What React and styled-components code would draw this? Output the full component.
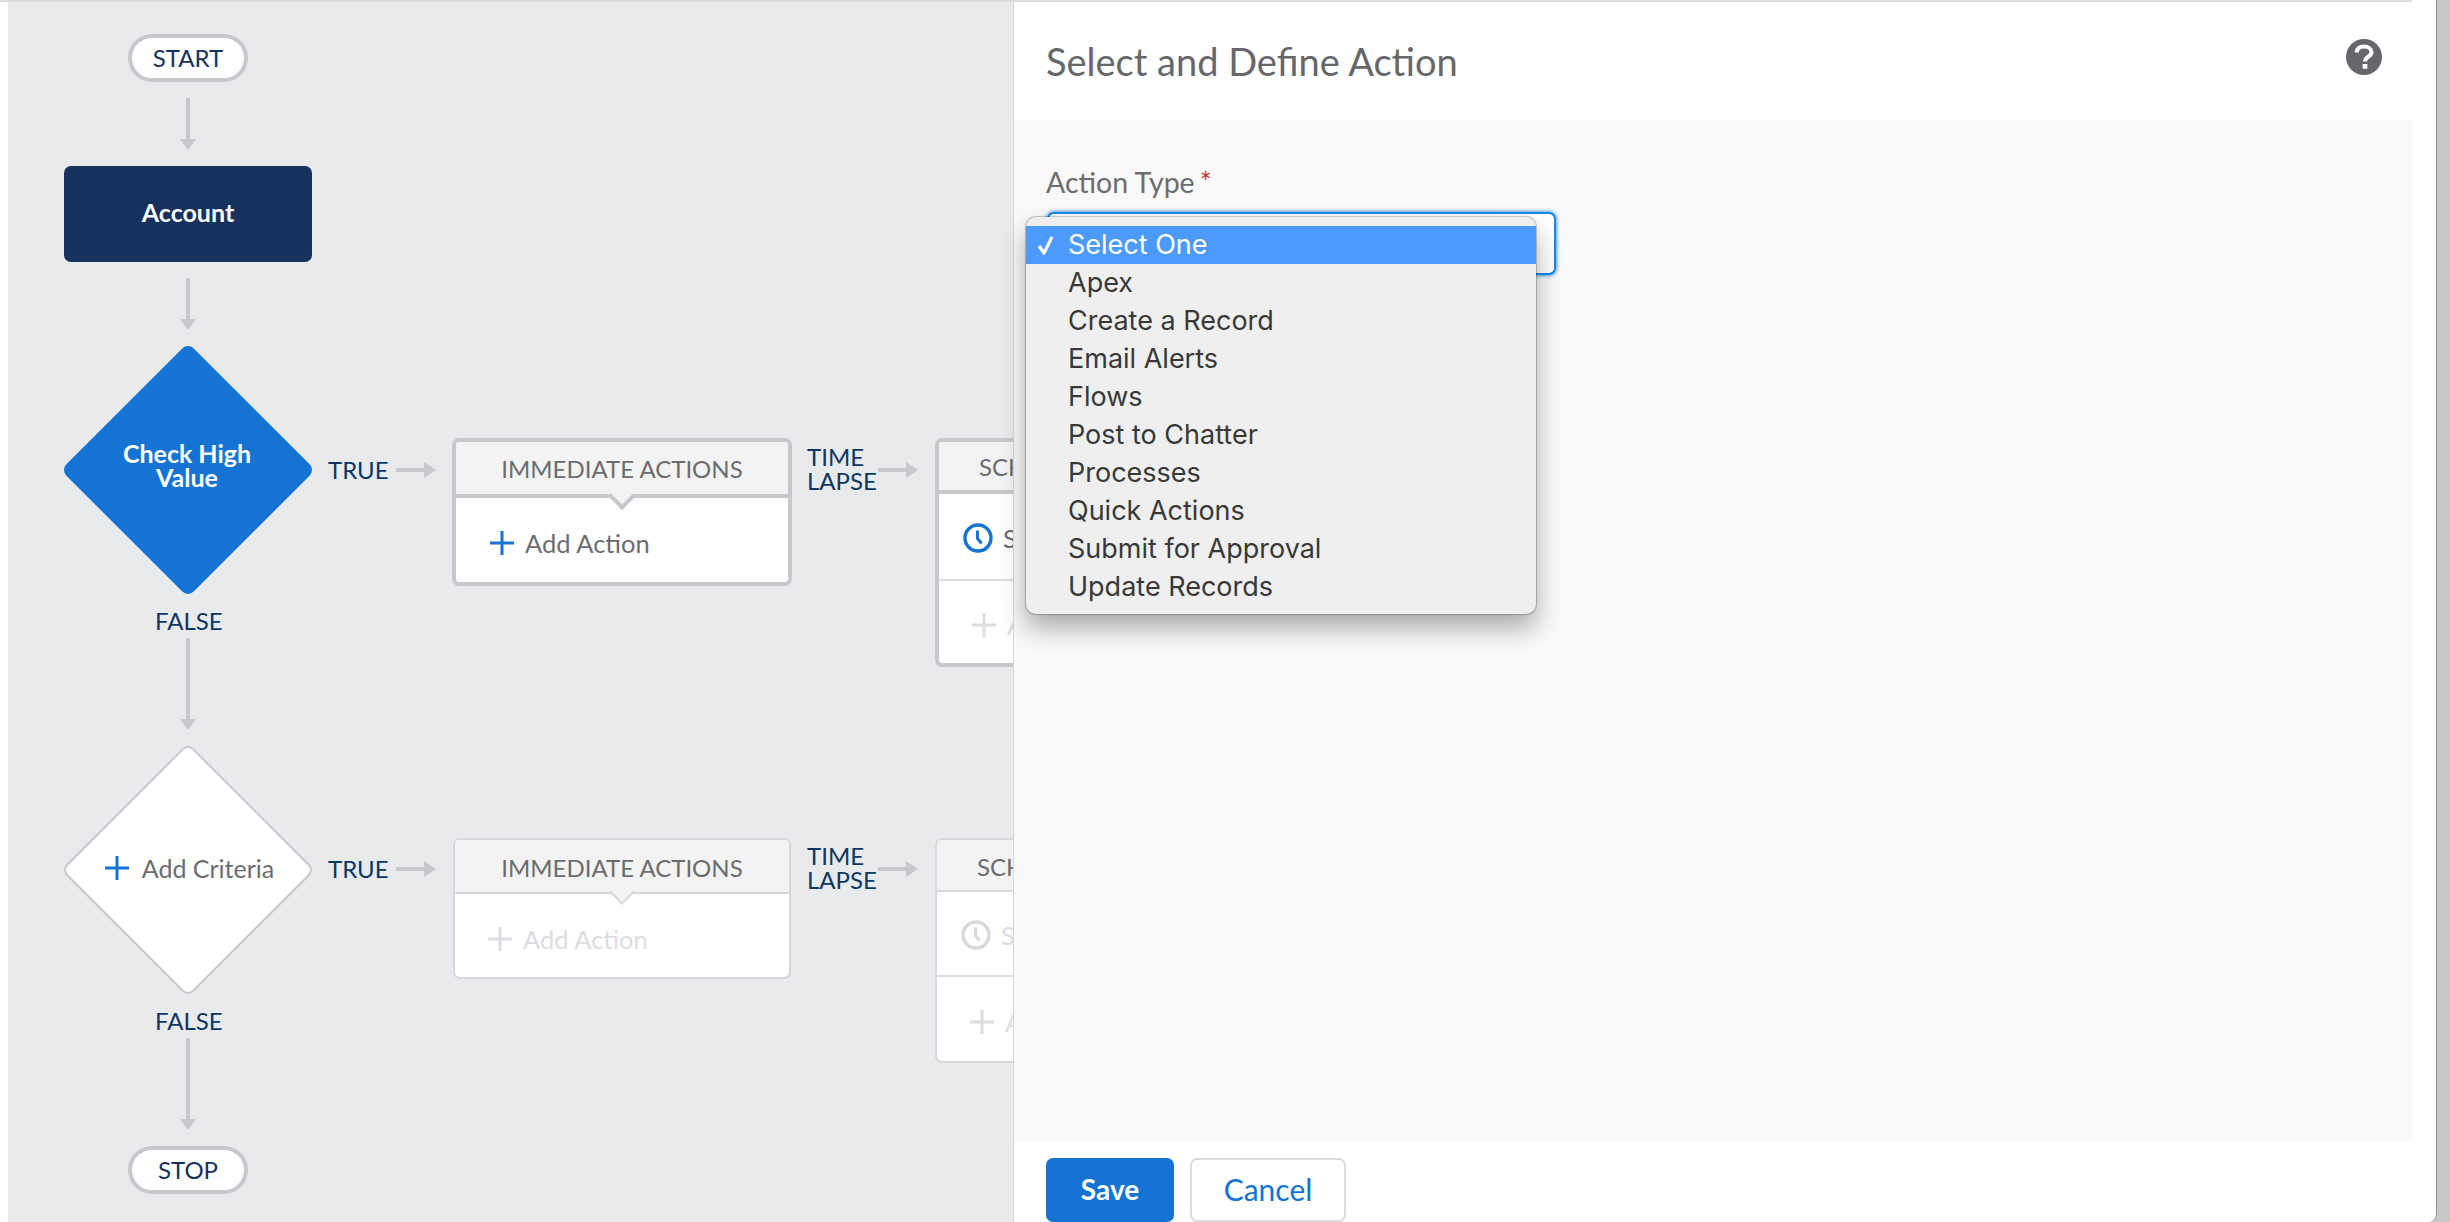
import React from "react";
import styled, { createGlobalStyle } from "styled-components";

const Global = createGlobalStyle`
  html, body { margin: 0; padding: 0; background: #fff; }
  body { width: 2450px; height: 1222px; overflow: hidden; font-family: Lato, "Open Sans", sans-serif; }
  *, *::before, *::after { box-sizing: border-box; }
`;

const NAVY = "#16325c";
const LABEL = "#0c3763";
const BLUE = "#1473d3";
const LINE = "#c7c8cc";
const GREY_TEXT = "#6b6c70";
const FAINT = "#dcdde0";

const Page = styled.div`
  display: flex;
  width: 2450px;
  height: 1222px;
  background: #c8c8c8;
`;
const Main = styled.div`
  display: flex;
  flex-direction: column;
  width: 2412px;
  height: 1222px;
`;
const TopLine = styled.div`
  height: 2px;
  flex: none;
  background: #dcdcdc;
`;
const Row = styled.div`
  display: flex;
  flex: 1;
  min-height: 0;
  background: #fff;
`;
const Gutter = styled.div`
  width: 8px;
  flex: none;
  background: #fff;
`;
const Canvas = styled.div`
  position: relative;
  width: 1005px;
  flex: none;
  overflow: hidden;
  background: #e9eaec;
`;
const RightMargin = styled.div`
  width: 25px;
  flex: none;
  margin-right: 13px;
  background: #fff;
  border-right: 1px solid #8f8f8f;
  border-bottom-right-radius: 8px;
`;

/* free-canvas diagram nodes: props are page coordinates */
const Node = styled.div`
  position: absolute;
  left: ${(p) => p.$x - 8}px;
  top: ${(p) => p.$y - 2}px;
`;
const Pill = styled(Node)`
  width: 120px;
  height: 48px;
  padding-bottom: 2px;
  display: flex;
  align-items: center;
  justify-content: center;
  background: #fff;
  border: 4px solid ${LINE};
  border-radius: 24px;
  color: ${NAVY};
  font-size: 24px;
`;
const ObjectBox = styled(Node)`
  width: 248px;
  height: 96px;
  padding-bottom: 4px;
  display: flex;
  align-items: center;
  justify-content: center;
  background: #16325c;
  border-radius: 7px;
  color: #fff;
  font-size: 25px;
  font-weight: 700;
`;
const Diamond = styled(Node)`
  width: 250px;
  height: 250px;
  display: flex;
  align-items: center;
  justify-content: center;
  &::before {
    content: "";
    position: absolute;
    left: 35px;
    top: 35px;
    width: 180px;
    height: 180px;
    border-radius: 8px;
    transform: rotate(45deg);
    background: ${(p) => (p.$filled ? BLUE : "#fff")};
    border: ${(p) => (p.$filled ? "none" : `2px solid ${LINE}`)};
  }
`;
const DiamondTitle = styled.div`
  position: relative;
  width: 140px;
  margin-right: 2px;
  padding-bottom: 10px;
  text-align: center;
  color: #fff;
  font-size: 25px;
  font-weight: 700;
  line-height: 24px;
`;
const AddCriteria = styled.div`
  position: relative;
  display: flex;
  align-items: center;
  gap: 13px;
  margin: 0 0 5px 3px;
  color: ${GREY_TEXT};
  font-size: 25px;
`;
const FlowLabel = styled(Node)`
  color: ${LABEL};
  font-size: 24px;
  line-height: 24px;
  white-space: nowrap;
`;
const LapseLabel = styled(FlowLabel)`
  width: 71px;
  white-space: normal;
`;
const Card = styled(Node)`
  width: ${(p) => p.$w}px;
  height: ${(p) => p.$h}px;
  display: flex;
  flex-direction: column;
  background: #fff;
  border: ${(p) => (p.$active ? `4px solid ${LINE}` : "2px solid #d6d8dc")};
  border-radius: 7px;
`;
const CardHead = styled.div`
  position: relative;
  flex: none;
  height: ${(p) => p.$h}px;
  padding-left: ${(p) => p.$pad || 0}px;
  padding-top: ${(p) => (p.$active ? 0 : 2)}px;
  display: flex;
  align-items: center;
  justify-content: ${(p) => (p.$pad ? "flex-start" : "center")};
  background: #f3f3f3;
  border-bottom: ${(p) => (p.$active ? `4px solid ${LINE}` : "2px solid #d6d8dc")};
  border-radius: 4px 4px 0 0;
  color: ${GREY_TEXT};
  font-size: 24px;
  white-space: nowrap;
  &::after {
    content: ${(p) => (p.$notch ? '""' : "none")};
    position: absolute;
    left: 50%;
    bottom: ${(p) => (p.$active ? -12 : -9)}px;
    width: ${(p) => (p.$active ? 20 : 18)}px;
    height: ${(p) => (p.$active ? 20 : 18)}px;
    margin-left: ${(p) => (p.$active ? -10 : -9)}px;
    transform: rotate(45deg);
    background: #f3f3f3;
    border-right: ${(p) => (p.$active ? `4px solid ${LINE}` : "2px solid #d6d8dc")};
    border-bottom: ${(p) => (p.$active ? `4px solid ${LINE}` : "2px solid #d6d8dc")};
  }
`;
const CardRow = styled.div`
  flex: ${(p) => (p.$fixed ? "none" : 1)};
  height: ${(p) => (p.$fixed ? `${p.$fixed}px` : "auto")};
  display: flex;
  align-items: center;
  gap: ${(p) => p.$gap || 11}px;
  padding-left: ${(p) => p.$pad}px;
  padding-top: ${(p) => (p.$fixed ? 3 : 6)}px;
  border-bottom: ${(p) => (p.$fixed ? "2px solid #dddee1" : "none")};
  color: ${(p) => (p.$faint ? FAINT : GREY_TEXT)};
  font-size: 25.5px;
  white-space: nowrap;
`;

const Panel = styled.div`
  position: relative;
  display: flex;
  flex-direction: column;
  width: 1399px;
  flex: none;
  background: #fff;
  border-left: 1px solid #d8d8d8;
`;
const PanelHead = styled.div`
  flex: none;
  height: 118px;
  display: flex;
  justify-content: space-between;
  align-items: flex-start;
  padding: 36px 30px 0 32px;
`;
const Title = styled.h2`
  margin: 0;
  color: #66676b;
  font-size: 38px;
  font-weight: 400;
  line-height: 46px;
`;
const Help = styled.svg`
  width: 36px;
  height: 36px;
  margin-top: 1px;
`;
const PanelBody = styled.div`
  flex: 1;
  min-height: 0;
  padding: 46px 0 0 33px;
  background: #f9f9f9;
`;
const Label = styled.label`
  display: block;
  height: 32px;
  margin-left: -1px;
  color: ${GREY_TEXT};
  font-size: 28.5px;
  line-height: 32px;
`;
const Req = styled.span`
  margin-left: 5px;
  color: #c23934;
  font-size: 28px;
`;
const SelectWrap = styled.div`
  position: relative;
  width: 509px;
  height: 63px;
  margin-top: 14px;
`;
const SelectBox = styled.div`
  width: 100%;
  height: 100%;
  background: #fff;
  border: 2px solid #1589ee;
  border-radius: 7px;
  box-shadow: 0 0 4px #0070d2;
`;
const Menu = styled.ul`
  position: absolute;
  left: -21px;
  top: 5px;
  width: 510px;
  margin: 0;
  padding: 9px 0 8px;
  list-style: none;
  background: #efefef;
  border-radius: 10px;
  box-shadow: 0 0 1px 1px rgba(0, 0, 0, 0.22), 0 14px 26px rgba(0, 0, 0, 0.32);
`;
const MenuItem = styled.li`
  position: relative;
  height: 38px;
  padding: 0 0 2px 42px;
  display: flex;
  align-items: center;
  background: ${(p) => (p.$selected ? "#4c9bfc" : "transparent")};
  color: ${(p) => (p.$selected ? "#fff" : "#383838")};
  font-family: Inter, Roboto, "Liberation Sans", sans-serif;
  font-size: 27px;
  white-space: nowrap;
`;
const Check = styled.svg`
  position: absolute;
  left: 10px;
  top: 9px;
  width: 20px;
  height: 20px;
`;
const Footer = styled.div`
  flex: none;
  height: 80px;
  display: flex;
  gap: 16px;
  padding: 16px 0 0 32px;
  background: #fff;
`;
const Button = styled.button`
  height: 64px;
  width: ${(p) => p.$w}px;
  padding: 0 0 2px;
  border: ${(p) => (p.$primary ? "none" : "2px solid #dddbda")};
  border-radius: 7px;
  background: ${(p) => (p.$primary ? BLUE : "#fff")};
  color: ${(p) => (p.$primary ? "#fff" : BLUE)};
  font-family: inherit;
  font-size: ${(p) => (p.$primary ? 28 : 30)}px;
  font-weight: ${(p) => (p.$primary ? 700 : 400)};
`;

const ArrowSvg = styled.svg`
  position: absolute;
  left: ${(p) => p.$x - 8}px;
  top: ${(p) => p.$y - 2}px;
  display: block;
`;
function ArrowDown({ x, y, len }) {
  return (
    <ArrowSvg $x={x - 8} $y={y} width="16" height={len} viewBox={`0 0 16 ${len}`}>
      <rect x="6" y="0" width="4" height={len - 8} fill={LINE} />
      <path d={`M0 ${len - 11}H16L8 ${len}Z`} fill={LINE} />
    </ArrowSvg>
  );
}
function ArrowRight({ x, y, len }) {
  return (
    <ArrowSvg $x={x} $y={y - 8} width={len} height="16" viewBox={`0 0 ${len} 16`}>
      <rect x="0" y="6" width={len - 8} height="4" fill={LINE} />
      <path d={`M${len - 12} 0V16L${len} 8Z`} fill={LINE} />
    </ArrowSvg>
  );
}
const Plus = ({ color, size = 24 }) => (
  <svg width={size} height={size} viewBox="0 0 24 24" style={{ flex: "none" }}>
    <path d="M12 0V24M0 12H24" stroke={color} strokeWidth="3" fill="none" />
  </svg>
);
const Clock = ({ color }) => (
  <svg width="30" height="30" viewBox="0 0 30 30" style={{ flex: "none" }}>
    <circle cx="15" cy="15" r="13" stroke={color} strokeWidth="3.4" fill="none" />
    <path d="M14.5 7.5V15.5L18.5 20.5" stroke={color} strokeWidth="3" fill="none" />
  </svg>
);

const ITEMS = ["Apex", "Create a Record", "Email Alerts", "Flows", "Post to Chatter", "Processes", "Quick Actions", "Submit for Approval", "Update Records"];

function Lane({ y, cardTop, active }) {
  const plusColor = active ? BLUE : FAINT;
  const clockColor = active ? BLUE : "#d6d8dc";
  return (
    <>
      <FlowLabel $x={328} $y={y - 12}>TRUE</FlowLabel>
      <ArrowRight x={396} y={y} len={40} />
      <Card $x={active ? 452 : 453} $y={cardTop} $w={active ? 340 : 338} $h={active ? 148 : 141} $active={active}>
        <CardHead $h={active ? 56 : 54} $notch $active={active}>IMMEDIATE ACTIONS</CardHead>
        <CardRow $pad={active ? 34 : 33} $faint={!active}>
          <Plus color={plusColor} />
          <span>Add Action</span>
        </CardRow>
      </Card>
      <LapseLabel $x={807} $y={y - 25}>TIME LAPSE</LapseLabel>
      <ArrowRight x={878} y={y} len={40} />
      <Card $x={935} $y={cardTop} $w={300} $h={active ? 229 : 225} $active={active}>
        <CardHead $h={52} $pad={40} $active={active}>SCH</CardHead>
        <CardRow $fixed={active ? 87 : 85} $pad={24} $gap={10} $faint={!active}>
          <Clock color={clockColor} />
          <span>Se</span>
        </CardRow>
        <CardRow $pad={33} $faint>
          <Plus color={FAINT} />
          <span>Ad</span>
        </CardRow>
      </Card>
    </>
  );
}

export default function App() {
  return (
    <Page>
      <Global />
      <Main>
        <TopLine />
        <Row>
          <Gutter />
          <Canvas>
            <Pill $x={128} $y={34}>START</Pill>
            <ArrowDown x={188} y={98} len={52} />
            <ObjectBox $x={64} $y={166}>Account</ObjectBox>
            <ArrowDown x={188} y={278} len={52} />
            <Diamond $x={63} $y={345} $filled>
              <DiamondTitle>Check High Value</DiamondTitle>
            </Diamond>
            <Lane y={470} cardTop={438} active />
            <FlowLabel $x={155} $y={609}>FALSE</FlowLabel>
            <ArrowDown x={188} y={638} len={92} />
            <Diamond $x={63} $y={745}>
              <AddCriteria>
                <Plus color={BLUE} />
                <span>Add Criteria</span>
              </AddCriteria>
            </Diamond>
            <Lane y={869} cardTop={838} />
            <FlowLabel $x={155} $y={1009}>FALSE</FlowLabel>
            <ArrowDown x={188} y={1038} len={92} />
            <Pill $x={128} $y={1146}>STOP</Pill>
          </Canvas>
          <Panel>
            <PanelHead>
              <Title>Select and Define Action</Title>
              <Help viewBox="0 0 36 36">
                <circle cx="18" cy="18" r="18" fill="#66676b" />
                <path d="M10.5 13.5C11 9.5 14 7.5 18 7.5C22.5 7.5 25.5 10 25.5 13.5C25.5 17.5 19 18 19 22.5" stroke="#fff" strokeWidth="4" fill="none" />
                <rect x="16.6" y="25" width="4.8" height="4.8" fill="#fff" />
              </Help>
            </PanelHead>
            <PanelBody>
              <Label>Action Type<Req>*</Req></Label>
              <SelectWrap>
                <SelectBox />
                <Menu>
                  <MenuItem $selected>
                    <Check viewBox="0 0 20 20">
                      <path d="M3 11L8 18L16 2" stroke="#fff" strokeWidth="3.2" fill="none" />
                    </Check>
                    Select One
                  </MenuItem>
                  {ITEMS.map((t) => (
                    <MenuItem key={t}>{t}</MenuItem>
                  ))}
                </Menu>
              </SelectWrap>
            </PanelBody>
            <Footer>
              <Button $primary $w={128}>Save</Button>
              <Button $w={156}>Cancel</Button>
            </Footer>
          </Panel>
        </Row>
      </Main>
      <RightMargin />
    </Page>
  );
}
